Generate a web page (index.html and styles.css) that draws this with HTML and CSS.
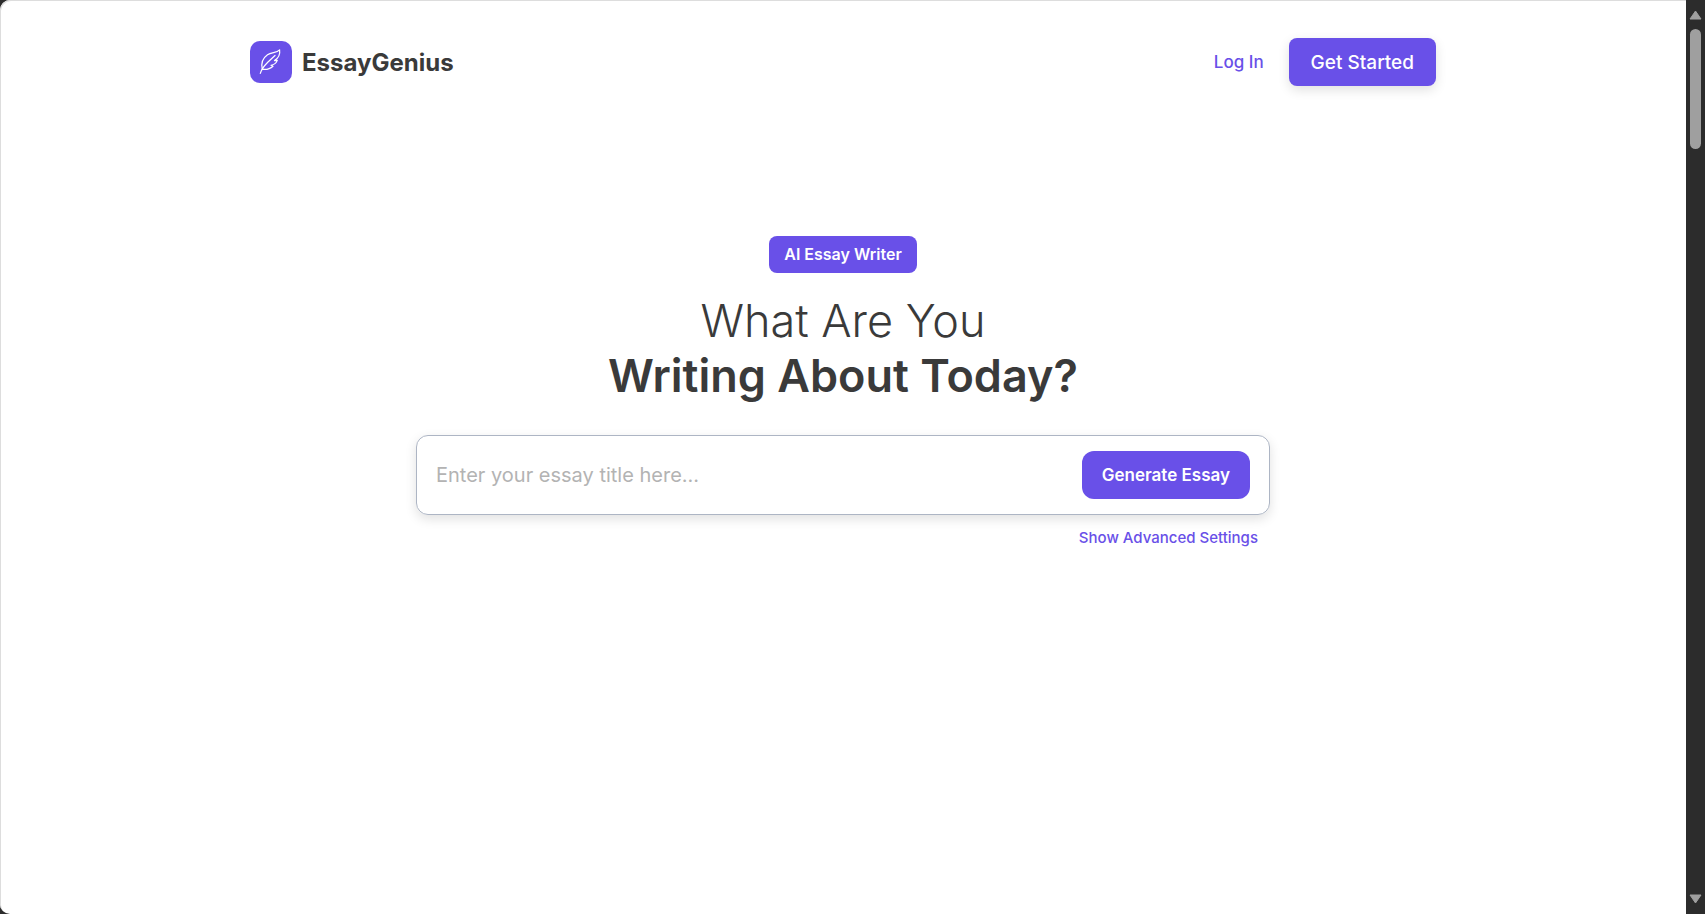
FILE: index.html
```html
<!DOCTYPE html>
<html lang="en">
<head>
    <meta charset="UTF-8">
    <meta name="viewport" content="width=device-width, initial-scale=1.0">
    <title>EssayGenius</title>
    <link rel="stylesheet" href="styles.css">
</head>
<body>
<div class="window">
    <div class="page">
        <header class="navbar">
            <a class="brand" href="#">
                <svg class="brand-icon" viewBox="0 0 42 42" aria-hidden="true">
                    <rect width="42" height="42" rx="10" fill="#6950e8"/>
                    <g fill="none" stroke="#ffffff" stroke-width="1.2" stroke-linecap="round" stroke-linejoin="round">
                        <path d="M10.3 32.3C11.500 28 14.500 24.500 18 21L25 14.500"/>
                        <path d="M12.300 28.300C10.800 22 13 17 17.500 13.800C21.500 11 26.500 12 29.600 8.800C30.300 13 29 16.500 24.500 19.600L27.300 19.400C26.300 22 25 23.500 21 24.300L23 25.200C20 28 16 28.800 12.300 28.300"/>
                    </g>
                </svg>
                <span class="brand-name">EssayGenius</span>
            </a>
            <nav class="nav-actions">
                <a class="login" href="#">Log In</a>
                <button class="button get-started" type="button">Get Started</button>
            </nav>
        </header>

        <main class="hero">
            <span class="badge">AI Essay Writer</span>
            <h1>What Are You<br><strong>Writing About Today?</strong></h1>
            <form class="essay-form">
                <input type="text" name="title" aria-label="Essay title" placeholder="Enter your essay title here...">
                <button class="button generate" type="submit">Generate Essay</button>
            </form>
            <div class="settings">
                <a href="#">Show Advanced Settings</a>
            </div>
        </main>
    </div>

    <div class="scrollbar" aria-hidden="true">
        <svg class="arrow" viewBox="0 0 13 10"><path d="M6.5 1L12 9H1Z"/></svg>
        <div class="track">
            <div class="thumb"></div>
        </div>
        <svg class="arrow" viewBox="0 0 13 10"><path d="M6.5 9L1 1H12Z"/></svg>
    </div>
</div>
</body>
</html>
```

FILE: styles.css
```css
* {
    box-sizing: border-box;
}

body {
    margin: 0;
    font-family: Inter, "Liberation Sans", sans-serif;
    color: #3a3a3a;
    background-color: #2c2c2c;
}

a {
    color: #6950e8;
    text-decoration: none;
}

.window {
    display: flex;
    height: 100vh;
}

.page {
    flex: 1;
    background-color: #ffffff;
    border-radius: 10px 0 0 10px;
    box-shadow: inset 1px 1px 0 #dddddd;
}

.navbar {
    display: flex;
    justify-content: space-between;
    align-items: center;
    max-width: 1186px;
    margin: 0 auto;
    padding-top: 38px;
}

.brand {
    display: flex;
    align-items: center;
    gap: 10px;
}

.brand-icon {
    width: 42px;
    height: 42px;
}

.brand-name {
    font-size: 24px;
    font-weight: 700;
    color: #3a3a3a;
}

.nav-actions {
    display: flex;
    align-items: center;
    gap: 25px;
}

.login {
    font-size: 17px;
    font-weight: 500;
}

.button {
    height: 48px;
    font-family: inherit;
    color: #ffffff;
    background-color: #6950e8;
    border: none;
    cursor: pointer;
}

.get-started {
    padding: 0 22px;
    font-size: 19px;
    font-weight: 500;
    border-radius: 8px;
    box-shadow: 0 4px 12px rgba(0, 0, 0, 0.12);
}

.hero {
    display: flex;
    flex-direction: column;
    align-items: center;
    max-width: 854px;
    margin: 150px auto 0;
}

.badge {
    padding: 0 15px;
    font-size: 16px;
    font-weight: 600;
    line-height: 37px;
    color: #ffffff;
    background-color: #6950e8;
    border-radius: 8px;
}

h1 {
    margin: 20px 0 32px;
    font-size: 45px;
    font-weight: 300;
    line-height: 55px;
    text-align: center;
}

h1 strong {
    font-weight: 600;
}

.essay-form {
    display: flex;
    align-items: center;
    width: 100%;
    height: 80px;
    padding: 0 19px;
    border: 1px solid #adb5c4;
    border-radius: 12px;
    box-shadow: 0 4px 12px rgba(0, 0, 0, 0.12);
}

.essay-form input {
    flex: 1;
    min-width: 0;
    padding: 0;
    font-family: inherit;
    font-size: 20px;
    color: #3a3a3a;
    background: none;
    border: none;
    outline: none;
}

.essay-form input::placeholder {
    color: #b3b3b3;
}

.generate {
    padding: 0 20px;
    font-size: 17px;
    font-weight: 600;
    border-radius: 12px;
}

.settings {
    align-self: flex-end;
    padding: 12px 12px 0;
    font-size: 15px;
    font-weight: 500;
    line-height: 22px;
}

.scrollbar {
    display: flex;
    flex-direction: column;
    align-items: center;
    width: 19px;
    padding: 10px 0;
    background-color: #2c2c2c;
}

.arrow {
    width: 13px;
    height: 10px;
    fill: #9f9f9f;
    stroke: #9f9f9f;
    stroke-linejoin: round;
}

.track {
    flex: 1;
    padding-top: 9px;
}

.thumb {
    width: 11px;
    height: 120px;
    background-color: #9f9f9f;
    border-radius: 6px;
}
```
